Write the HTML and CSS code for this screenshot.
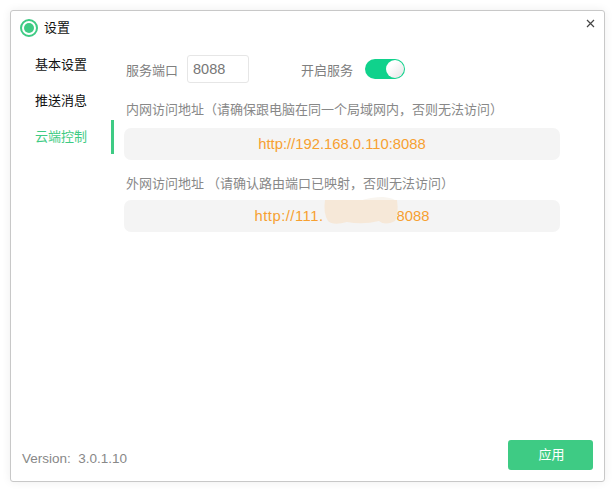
FILE: index.html
```html
<!DOCTYPE html>
<html lang="zh">
<head>
<meta charset="utf-8">
<title>设置</title>
<link rel="stylesheet" href="styles.css">
</head>
<body>
<div class="window">
  <header class="titlebar">
    <span class="logo"><span class="logo-dot"></span></span>
    <span class="title">设置</span>
    <svg class="close" width="9" height="9" viewBox="0 0 9 9"><path d="M1 1l7 7M8 1L1 8" stroke="#444" stroke-width="1.2" fill="none"/></svg>
  </header>
  <div class="body">
    <nav class="side">
      <div class="item">基本设置</div>
      <div class="item">推送消息</div>
      <div class="item active">云端控制</div>
    </nav>
    <main class="main">
      <div class="row">
        <span class="label">服务端口</span>
        <span class="port">8088</span>
        <span class="label service">开启服务</span>
        <span class="switch"><span class="knob"></span></span>
      </div>
      <div class="caption first">内网访问地址（请确保跟电脑在同一个局域网内，否则无法访问）</div>
      <div class="url">http://192.168.0.110:8088</div>
      <div class="caption">外网访问地址 （请确认路由端口已映射，否则无法访问）</div>
      <div class="url second"><span class="wide">http://111.</span><span class="gap"></span>8088
        <svg class="smudge" width="76" height="30" viewBox="0 0 76 30"><path d="M36 4 Q48 0 60 0 Q72 1 74 5 L74 7 L36 7Z" fill="#f9f5ef"/><path d="M2 3 L74 3 Q76 18 72 24 Q62 29 56 24 Q40 28 24 25 Q10 29 5 24 Q0 16 2 3Z" fill="#f6e8d8"/></svg>
      </div>
    </main>
  </div>
  <footer class="footer">
    <span class="version">Version:&nbsp; 3.0.1.10</span>
    <button class="apply">应用</button>
  </footer>
</div>
</body>
</html>
```
FILE: styles.css
```css
* { box-sizing: border-box; }
html, body { margin: 0; height: 100%; background: #fff; }
body {
  padding: 10px 10px 9px 10px;
  font-family: "Noto Sans CJK SC", "Liberation Sans", sans-serif;
  font-size: 13px;
  overflow: hidden;
}
.window {
  width: 595px;
  height: 472px;
  background: #fff;
  border: 1px solid #c8c8c8;
  border-radius: 3px;
  box-shadow: 0 0 10px rgba(0,0,0,.07);
  display: flex;
  flex-direction: column;
}
.titlebar {
  height: 33px;
  display: flex;
  align-items: center;
  padding: 0 9px;
  gap: 6px;
  flex: none;
  position: relative;
}
.logo {
  width: 18px; height: 18px;
  border-radius: 50%;
  border: 2px solid #3ecb84;
  background: #fff;
  display: flex;
  align-items: center;
  justify-content: center;
}
.logo-dot { width: 10px; height: 10px; border-radius: 50%; background: #3ecb84; }
.title { color: #111; font-size: 13px; line-height: 18px; margin-top: -2px; }
.close { position: absolute; right: 9px; top: 8px; }
.body { flex: 1; display: flex; min-height: 0; }
.side { width: 103px; flex: none; padding-top: 2px; }
.item {
  height: 36px;
  line-height: 36px;
  padding-left: 24px;
  color: #111;
  font-size: 13px;
}
.item.active {
  height: 34px;
  margin-top: 2px;
  line-height: 32px;
  color: #3ecb84;
  border-right: 3px solid #3ecb84;
}
.main { width: 436px; margin-left: 10px; flex: none; }
.row { display: flex; align-items: center; height: 28px; margin-top: 11px; }
.label { color: #808080; font-size: 13px; padding-left: 2px; }
.port {
  width: 62px; height: 28px;
  margin-left: 9px;
  border: 1px solid #e6e6e6;
  border-radius: 3px;
  padding-left: 5px;
  line-height: 26px;
  color: #777;
  font-family: "Liberation Sans", sans-serif;
  font-size: 14.5px;
}
.service { margin-left: 50px; }
.switch {
  width: 40px; height: 20px;
  margin-left: 12px;
  border-radius: 10px;
  background: #10d28c;
  display: flex;
  justify-content: flex-end;
  padding: 1px;
}
.knob {
  width: 18px; height: 18px;
  border-radius: 50%;
  background: linear-gradient(135deg, #fff 30%, #e4e4e4);
}
.caption { color: #888; font-size: 13px; line-height: 20px; margin-top: 13px; padding-left: 2px; }
.caption.first { margin-top: 16px; margin-bottom: 9px; }
.url {
  height: 32px;
  border-radius: 7px;
  background: #f4f4f4;
  color: #f7a030;
  font-family: "Liberation Sans", sans-serif;
  font-size: 14.8px;
  line-height: 33px;
  text-align: center;
}
.url.second { margin-top: 7px; position: relative; }
.wide { letter-spacing: .5px; }
.gap { display: inline-block; width: 73px; }
.smudge { position: absolute; left: 199px; top: -3px; }
.footer {
  height: 41px;
  flex: none;
  display: flex;
  align-items: flex-start;
  justify-content: space-between;
  padding: 0 11px 0 11px;
}
.version {
  color: #888;
  font-family: "Liberation Sans", sans-serif;
  font-size: 13.5px;
  margin-top: 11px;
}
.apply {
  width: 85px; height: 30px;
  border: none;
  border-radius: 3px;
  background: #3ecb84;
  color: #fff;
  font-family: "Noto Sans CJK SC", sans-serif;
  font-size: 13px;
  padding: 0 0 3px 2px;
}
```
